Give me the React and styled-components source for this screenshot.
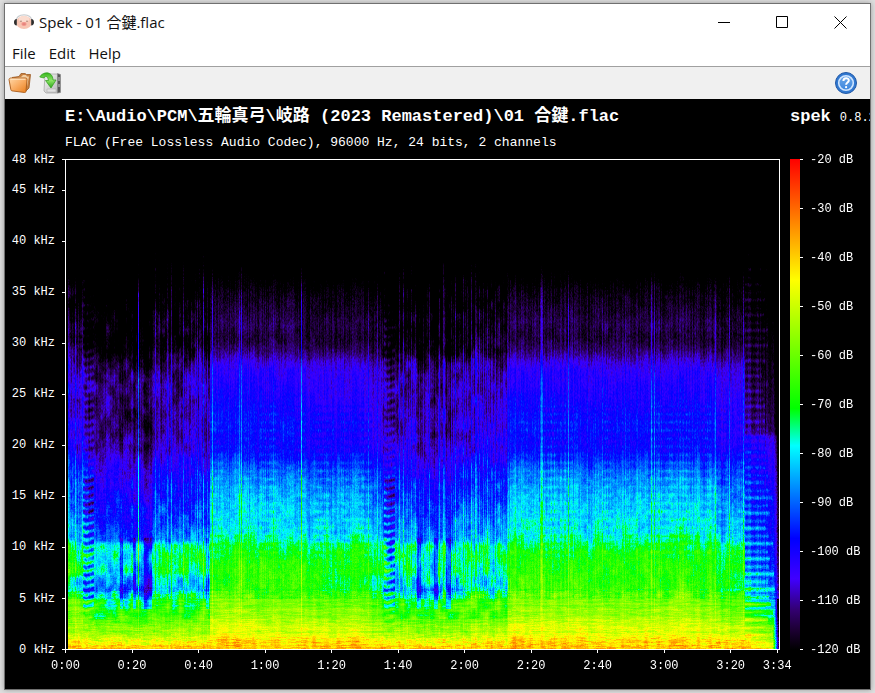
import React, { useEffect, useRef } from 'react'
import styled, { createGlobalStyle } from 'styled-components'

const DURATION = 214
const freqTicks = [48, 45, 40, 35, 30, 25, 20, 15, 10, 5, 0]
const timeTicks = [0, 20, 40, 60, 80, 100, 120, 140, 160, 180, 200, DURATION]
const dbTicks = [-20, -30, -40, -50, -60, -70, -80, -90, -100, -110, -120]

const formatTime = (s) => `${Math.floor(s / 60)}:${String(s % 60).padStart(2, '0')}`

// colour stops of the palette, as [dB, r, g, b]
const palette = [
    [-120, 0, 0, 0],
    [-116, 28, 0, 50],
    [-112, 50, 0, 110],
    [-105.5, 64, 0, 255],
    [-97.3, 0, 0, 255],
    [-78.4, 0, 255, 255],
    [-70.8, 0, 255, 0],
    [-44.7, 255, 255, 0],
    [-20, 255, 0, 0],
]

const paletteCss = [...palette].reverse()
    .map(([db, r, g, b]) => `rgb(${r},${g},${b}) ${(-20 - db).toFixed(1)}%`)
    .join(', ')

// level over frequency, as [kHz, dB]
const loud = [[0, -38], [0.5, -42], [1, -45], [2, -49], [3, -52], [4, -56], [5, -60], [6, -65], [8, -67], [9.5, -69], [10.5, -73], [11.5, -78], [13, -80], [15, -83], [17, -87], [18.3, -92], [19.3, -97], [20.5, -98], [22, -96], [24, -99], [26, -101.5], [27.5, -103], [28.2, -106], [29.4, -112.5], [30.5, -116], [32, -114], [33, -116], [35, -119], [36, -122], [38, -130], [48, -150]]
const quiet = [[0, -39], [0.5, -46], [1.2, -54], [2.5, -62], [3.6, -68], [4.8, -74], [5.3, -80], [6, -91], [7, -87], [7.6, -80], [10.2, -79], [10.7, -92], [13, -96], [16, -100], [19, -107], [20.6, -110], [21.2, -113], [23, -113], [26, -112], [28, -115], [29.2, -121], [33, -123], [36, -128], [48, -150]]
const ending = [[0, -48], [1, -57], [2.5, -68], [4, -82], [6, -93], [10, -98], [15, -100], [20.7, -106], [21.4, -114.5], [28, -120], [35, -126], [48, -150]]

// loudness over time, as [start column, end column, amount]
const sections = [
    [0, 2, -1], [2, 17, 0.42], [17, 28, 0.3], [28, 58, 0.08], [58, 86, -0.02], [86, 134, 0.24], [134, 144, 0.4],
    [144, 237, 1], [237, 306, 0.82], [306, 316, 0.55], [316, 329, 0.35], [329, 350, 0.32], [350, 387, 0.16],
    [387, 442, 0.42], [442, 650, 1], [650, 679, 0.74], [679, 713, 0],
]
const spikes = { 2: 12, 3: 5, 9: 5, 16: 8, 17: 6, 72: 20, 131: 13, 134: 6, 146: 9, 173: 8, 175: 8, 207: 7, 235: 14, 302: 5, 311: 7, 322: 4, 363: 8, 378: 7, 410: 6, 429: 6, 474: 6, 475: 8, 476: 5, 502: 9, 536: 6, 559: 6, 585: 9, 588: 9, 620: 5, 629: 4, 649: 10, 663: 8, 677: 8 }
const darkGaps = [[54, 57], [67, 70], [78, 86], [140, 143], [351, 355], [368, 372], [380, 385]]

const along = (points, x) => {
    let i = 1
    while (i < points.length - 1 && points[i][0] < x) i++
    const a = points[i - 1]
    const b = points[i]
    const t = Math.min(1, Math.max(0, (x - a[0]) / (b[0] - a[0])))
    return a.slice(1).map((v, k) => v + (b[k + 1] - v) * t)
}

const hash = (x, y) => {
    let n = Math.imul(x | 0, 374761393) + Math.imul(y | 0, 668265263)
    n = Math.imul(n ^ (n >>> 13), 1274126177)
    return ((n ^ (n >>> 16)) >>> 0) / 4294967295 * 2 - 1
}

const smooth = (x, y) => {
    const xi = Math.floor(x)
    const yi = Math.floor(y)
    const u = (x - xi) * (x - xi) * (3 - 2 * (x - xi))
    const v = (y - yi) * (y - yi) * (3 - 2 * (y - yi))
    const top = hash(xi, yi) * (1 - u) + hash(xi + 1, yi) * u
    const bottom = hash(xi, yi + 1) * (1 - u) + hash(xi + 1, yi + 1) * u
    return top * (1 - v) + bottom * v
}

const teeth = (y, period, power = 2) => Math.pow(0.5 + 0.5 * Math.cos((y / period) * Math.PI * 2), power)

const levelAt = (x, y, height) => {
    const khz = ((height - y) / height) * 48
    const up = height - y
    const amount = sections.find((s) => x >= s[0] && x < s[1])[2]
    if (amount < -0.5) return -140
    let db
    if (x >= 679) {
        const fade = (x - 679) / 30
        db = along(ending, khz)[0] + (khz < 7 ? 7 * (1 - fade) : 2 * (1 - fade))
        const reach = 706 - khz * 0.25 + hash(7, Math.round(up / 7.6)) * 4
        if (x < reach) {
            const strength = khz < 20 ? Math.min(25 - khz * 0.8, 4 + khz * 5) : 8
            db += strength * (teeth(up - 45, 15.2, 5) + 0.6 * teeth(up - 37, 15.2, 5)) * (1 - fade * 0.3)
        }
        const edge = 708 - Math.max(0, 4 - khz) * 0.6
        if (x > edge) db -= (x - edge) * (khz < 5 ? 9 : 2.6)
        if (x > 710) db -= 6
    } else {
        const a = along(quiet, khz)[0]
        const b = along(loud, khz + smooth(x / 4, 77) * (khz > 27 ? 0.3 : 0.7))[0]
        db = a + (b - a) * amount
        if (amount < 0.5) {
            const depth = khz < 3 ? 2 : khz < 11 ? 9 : 4.5
            db += smooth(x / 6, y / 12) * depth + smooth(x / 2.5, y / 5) * 2.5
            if (darkGaps.some(([s, e]) => x >= s && x < e) && khz > 4) db -= khz < 11 ? 12 : 3
            // plucked notes, one thin column every few pixels
            if ((x > 86 && x < 144) || (x > 329 && x < 442)) {
                db += x % 4 === 1 ? (khz > 5 ? 5 + hash(x, 31) * 3 : 1) : -1
            }
        } else {
            db += smooth(x / 7, y / 14) * (khz > 5 && khz < 13 ? 3.5 : 1.4)
            db += smooth(x / 3, y / 5) * (khz > 5 && khz < 17 ? 2.5 : 1)
        }
    }
    const striped = (x > 16 && x < 28) || (x > 317 && x < 329)
    if (striped) {
        const left = x < 28 ? 16 : 317
        const strength = khz < 4 ? khz * 2 : khz < 17 ? 20 : 7
        db += (teeth(up - Math.abs(x - left - 4) * 0.3, 7.8, 1.2) - 0.75 + (left + 5 - x) * 0.04) * strength
    }
    if ((x > 442 && x < 679) || (x > 144 && x < 306)) {
        if (khz > 9 && khz < 24) db += (teeth(up, 8.1) - 0.4) * 1.8 * (1 + 2 * smooth(x / 9, 3))
    }
    // drum hits are thin columns that reach up over the whole range
    db += (spikes[x] || 0) * Math.min(1, khz / 9) * (khz > 33 ? Math.max(0.2, 1 - (khz - 33) / 8) : 1)
    db += hash(x, 999) * (khz > 5 ? 2.8 : 0.8)
    db += hash(x, y) * (khz > 5 ? 3 : 2)
    if (khz < 6) {
        db += hash(Math.floor((x + hash(y, 5) * 6) / 9), y) * 3.2
        db += hash(3, Math.floor(y / 2)) * 2
        if (khz < 1.2) db += Math.max(0, hash(Math.floor(x / 5), y + 50)) * 5
    } else if (khz < 18) {
        db += hash(Math.floor(x / 4), y) * 1.6
    }
    return db
}

const Spectrogram = () => {
    const ref = useRef(null)

    useEffect(() => {
        const canvas = ref.current
        const ctx = canvas.getContext('2d')
        const { width, height } = canvas
        const image = ctx.createImageData(width, height)
        for (let y = 0; y < height; y++) {
            for (let x = 0; x < width; x++) {
                const db = Math.max(-120, Math.min(-20, levelAt(x, y, height)))
                const [r, g, b] = along(palette, db)
                const i = (y * width + x) * 4
                image.data[i] = r
                image.data[i + 1] = g
                image.data[i + 2] = b
                image.data[i + 3] = 255
            }
        }
        ctx.putImageData(image, 0, 0)
    }, [])

    return <Plot ref={ref} width={713} height={488} role="img" aria-label="Spectrogram" />
}

const PigIcon = () => (
    <svg width="20" height="16" viewBox="0 0 20 16">
        <path d="M2 7C2.500 2.500 6 .8 10 .8S17.500 2.500 18 7" fill="none" stroke="#c9cdd0" strokeWidth="1.200" />
        <ellipse cx="10" cy="8.500" rx="8" ry="6.500" fill="#f7c4b2" />
        <ellipse cx="10" cy="5" rx="5.500" ry="3" fill="#fbdccf" />
        <ellipse cx="10" cy="10" rx="2.600" ry="2" fill="#f2958c" />
        <circle cx="9.200" cy="10" r=".5" fill="#c9605a" />
        <circle cx="10.800" cy="10" r=".5" fill="#c9605a" />
        <circle cx="7" cy="7.200" r=".6" fill="#7b5348" />
        <circle cx="13" cy="7.200" r=".6" fill="#7b5348" />
        <path d="M2.800 5C.8 5 0 6.500 0 8.300s.8 3.200 2.800 3.200zM17.200 5C19.200 5 20 6.500 20 8.300s-.8 3.200-2.800 3.200z" fill="#2e2e2e" />
    </svg>
)

const FolderIcon = () => (
    <svg width="24" height="24" viewBox="0 0 24 24">
        <defs>
            <linearGradient id="folder" x1="0" y1="0" x2="1" y2="1">
                <stop offset="0" stopColor="#ffd9aa" />
                <stop offset=".5" stopColor="#f9ac62" />
                <stop offset="1" stopColor="#e87e1c" />
            </linearGradient>
        </defs>
        <path d="M4 6.500L11 5.500 13 2.500 17 2.500 18.500 3.500 22.500 3.500 21 17 18 20z" fill="#c9803f" stroke="#9a5a24" strokeWidth=".8" />
        <path d="M7 7l6-1 2-2 3 0 1 1.500 2 0-2 10z" fill="#f3cfa2" />
        <path d="M1 8.500C1 7.500 2 7 3 7l14.500 0c1 0 1.500.5 1.500 1.500L18 20c0 1-.5 1.500-1.500 1.500L5 20c-1.500 0-2-.5-2.200-1.500z" fill="url(#folder)" stroke="#a85a18" strokeWidth=".9" />
        <path d="M2.500 8.200l15 0" stroke="#ffe8c8" />
    </svg>
)

const SaveIcon = () => (
    <svg width="24" height="24" viewBox="0 0 24 24">
        <defs>
            <linearGradient id="disk" x1="0" y1="0" x2="1" y2="1">
                <stop offset="0" stopColor="#f8f8f8" />
                <stop offset="1" stopColor="#b6b6b6" />
            </linearGradient>
            <linearGradient id="arrow" x1="0" y1="0" x2="0" y2="1">
                <stop offset="0" stopColor="#35b51c" />
                <stop offset=".5" stopColor="#8be564" />
                <stop offset="1" stopColor="#2ca616" />
            </linearGradient>
        </defs>
        <path d="M6 3l13 0 0 19-12 0-2-2z" fill="url(#disk)" stroke="#a8a8a8" strokeWidth=".8" />
        <path d="M18.500 2.500l3 1 0 18-3 .5z" fill="#555" stroke="#888" strokeWidth=".6" />
        <path d="M20 6v4M20 13v3" stroke="#c7c7c7" />
        <path d="M8 18l9 0 0 3-9 0z" fill="#e2e2e2" stroke="#aaa" strokeWidth=".5" />
        <path d="M.8 6C3 1 13.500-1 14 9l3 0-5 8L6.500 9.500l3 0C9 5.500 6 4 5 7z" fill="url(#arrow)" stroke="#2d9a1a" strokeWidth=".7" />
    </svg>
)

const HelpIcon = () => (
    <svg width="24" height="24" viewBox="0 0 24 24">
        <defs>
            <linearGradient id="help" x1="0" y1="0" x2="0" y2="1">
                <stop offset="0" stopColor="#6ea8e8" />
                <stop offset="1" stopColor="#3b86de" />
            </linearGradient>
        </defs>
        <circle cx="12" cy="12" r="10.500" fill="#3178d0" stroke="#2259a6" strokeWidth="1" />
        <circle cx="12" cy="12" r="7.300" fill="url(#help)" stroke="#cfe5ff" strokeWidth="1.600" />
        <path d="M9.400 10c0-3.600 5.400-3.600 5.400-.6 0 2.100-2.700 2.100-2.700 4.300" fill="none" stroke="#fff" strokeWidth="2" />
        <circle cx="12.100" cy="16.200" r="1.100" fill="#fff" />
    </svg>
)

const App = () => {
    return (
        <>
            <GlobalStyle />
            <Desktop>
                <AppWindow>
                    <TitleBar>
                        <PigIcon />
                        <Title>Spek - 01 合鍵.flac</Title>
                        <WindowButton aria-label="Minimize">
                            <svg width="13" height="13" viewBox="0 0 13 13"><path d="M0 6.500h12" /></svg>
                        </WindowButton>
                        <WindowButton aria-label="Maximize">
                            <svg width="13" height="13" viewBox="0 0 13 13"><path d="M.5.5h11v11h-11z" /></svg>
                        </WindowButton>
                        <WindowButton aria-label="Close">
                            <svg width="13" height="13" viewBox="0 0 13 13"><path d="M.5.5l12 12M12.500.5l-12 12" /></svg>
                        </WindowButton>
                    </TitleBar>
                    <MenuBar>
                        <MenuButton>File</MenuButton>
                        <MenuButton>Edit</MenuButton>
                        <MenuButton>Help</MenuButton>
                    </MenuBar>
                    <ToolBar>
                        <ToolButton aria-label="Open"><FolderIcon /></ToolButton>
                        <ToolButton aria-label="Save"><SaveIcon /></ToolButton>
                        <Spacer />
                        <ToolButton aria-label="Help"><HelpIcon /></ToolButton>
                    </ToolBar>
                    <View>
                        <Header>
                            <FileInfo>
                                <FilePath>E:\Audio\PCM\五輪真弓\岐路 (2023 Remastered)\01 合鍵.flac</FilePath>
                                <Description>FLAC (Free Lossless Audio Codec), 96000 Hz, 24 bits, 2 channels</Description>
                            </FileInfo>
                            <Version><strong>spek</strong><span>0.8.2</span></Version>
                        </Header>
                        <Chart>
                            <FreqAxis>
                                {freqTicks.map((khz, i) => (
                                    <FreqStep key={khz} $size={khz - (freqTicks[i + 1] ?? khz)}>
                                        <SideTick>{khz} kHz<Dash /></SideTick>
                                    </FreqStep>
                                ))}
                            </FreqAxis>
                            <Frame><Spectrogram /></Frame>
                            <Legend>
                                <Gradient />
                                <DbAxis>
                                    {dbTicks.map((db) => (
                                        <SideTick key={db}><Dash />{db} dB</SideTick>
                                    ))}
                                </DbAxis>
                            </Legend>
                        </Chart>
                        <TimeAxis>
                            {timeTicks.map((s, i) => (
                                <TimeStep key={s} $size={(timeTicks[i + 1] ?? s + 1) - s}>
                                    <TimeTick>{formatTime(s)}</TimeTick>
                                </TimeStep>
                            ))}
                        </TimeAxis>
                    </View>
                </AppWindow>
            </Desktop>
        </>
    )
}

const GlobalStyle = createGlobalStyle`
*{
    box-sizing:border-box;
}
body{
    margin:0;
    background:#dedede;
}
button{
    border:0;
    padding:0;
    background:none;
    font:inherit;
    color:inherit;
}
`

const Desktop = styled.main`
    display:flex;
    height:100vh;
    min-height:400px;
    padding:3px 4px;
`

const AppWindow = styled.div`
    flex:1;
    min-width:0;
    display:flex;
    flex-direction:column;
    border:1px solid #707070;
    background:#fff;
    color:#111;
    font-family:"Open Sans", "Noto Sans CJK JP", sans-serif;
    font-size:15px;
    overflow:hidden;
    box-shadow:0 0 5px rgba(0,0,0,.3);
`

const TitleBar = styled.header`
    display:flex;
    align-items:center;
    height:36px;
    padding:0 1px 0 9px;
`

const Title = styled.span`
    flex:1;
    padding-left:5px;
    font-size:15px;
    line-height:36px;
`

const WindowButton = styled.button`
    width:58px;
    height:36px;
    display:flex;
    align-items:center;
    justify-content:center;
    svg{
        fill:none;
        stroke:#000;
    }
`

const MenuBar = styled.nav`
    display:flex;
    gap:13px;
    height:27px;
    padding:0 7px;
    border-bottom:1px solid #a0a0a0;
`

const MenuButton = styled.button`
    line-height:26px;
`

const ToolBar = styled.div`
    display:flex;
    align-items:center;
    gap:7px;
    height:32px;
    padding:0 12px 0 3px;
    background:#f0f0f0;
`

const ToolButton = styled.button`
    display:flex;
`

const Spacer = styled.div`
    flex:1;
`

const View = styled.section`
    flex:1;
    display:flex;
    flex-direction:column;
    background:#000;
    color:#fff;
    font-family:"Liberation Mono", "Noto Sans CJK JP", monospace;
    font-size:12px;
    white-space:nowrap;
`

const Header = styled.div`
    display:flex;
    justify-content:space-between;
    height:60px;
    padding:6px 0 0 60px;
`

const FileInfo = styled.div`
    min-width:0;
    overflow:hidden;
`

const FilePath = styled.h1`
    margin:0;
    font-size:17px;
    line-height:24px;
    font-weight:bold;
`

const Description = styled.p`
    margin:0;
    font-size:13px;
    line-height:28px;
`

const Version = styled.div`
    width:80px;
    display:flex;
    align-items:baseline;
    gap:9px;
    line-height:24px;
    overflow:hidden;
    strong{
        font-size:17px;
    }
`

const Chart = styled.div`
    flex:1;
    display:flex;
    min-height:0;
`

const FreqAxis = styled.div`
    width:60px;
    display:flex;
    flex-direction:column;
`

const FreqStep = styled.div`
    flex:${({ $size }) => $size} 1 0;
    min-height:1px;
`

const SideTick = styled.div`
    display:flex;
    align-items:center;
    justify-content:flex-end;
    gap:7px;
    height:1px;
    line-height:14px;
`

const Dash = styled.i`
    width:3px;
    height:1px;
    background:#fff;
`

const Frame = styled.div`
    flex:1;
    min-width:0;
    border:1px solid #fff;
`

const Plot = styled.canvas`
    display:block;
    width:100%;
    height:100%;
`

const Legend = styled.div`
    width:90px;
    display:flex;
    padding-left:10px;
`

const Gradient = styled.div`
    width:10px;
    background:linear-gradient(${paletteCss});
`

const DbAxis = styled.div`
    display:flex;
    flex-direction:column;
    justify-content:space-between;
    ${SideTick}{
        justify-content:flex-start;
    }
`

const TimeAxis = styled.div`
    display:flex;
    height:39px;
    padding:0 90px 0 60px;
`

const TimeStep = styled.div`
    flex:${({ $size }) => $size} 1 0;
    min-width:0;
`

const TimeTick = styled.div`
    display:flex;
    flex-direction:column;
    align-items:center;
    width:1px;
    line-height:26px;
    &::before{
        content:'';
        width:1px;
        height:3px;
        background:#fff;
    }
`

export default App
